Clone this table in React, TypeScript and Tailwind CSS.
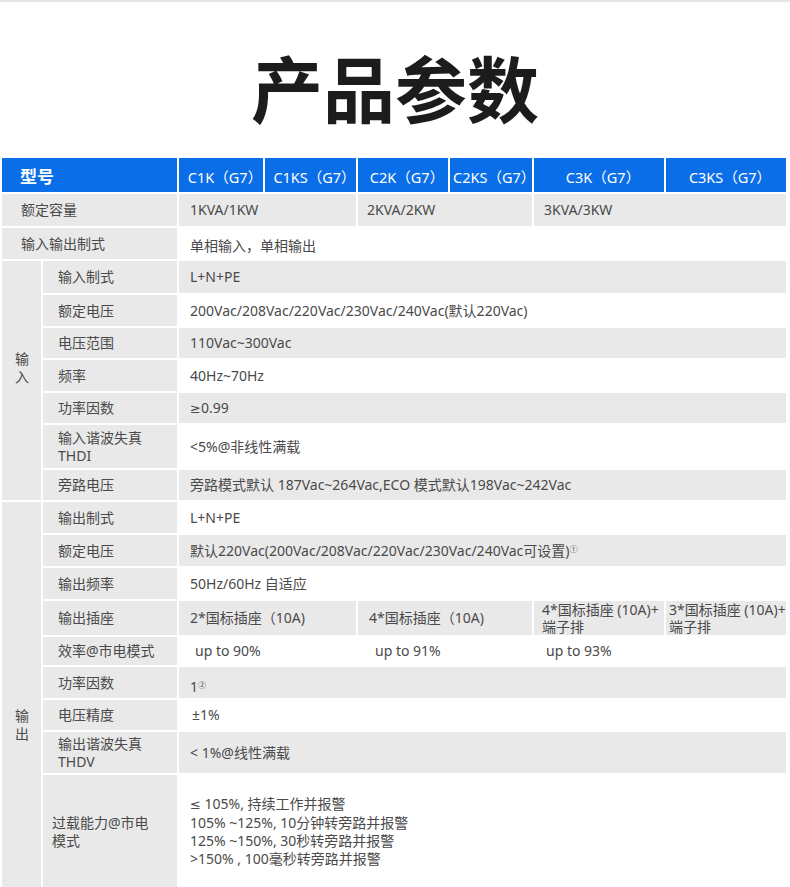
import { ReactNode } from "react"

const gray = "bg-[#e9e9e9]"
const blue = "bg-[#0a6ee8]"

type CellProps = {
  children?: ReactNode
  className?: string
  pad?: string
  colSpan?: number
}

function Label({ children, pad = "pl-[15px]" }: CellProps) {
  return <td className={`${gray} ${pad}`}>{children}</td>
}

function Value({ children, className = "", pad = "pl-[11px]", colSpan = 6 }: CellProps) {
  return (
    <td colSpan={colSpan} className={`${pad} ${className}`}>
      {children}
    </td>
  )
}

function Head({ children, pad = "pl-[8px]" }: CellProps) {
  return <td className={`${blue} pt-1 ${pad} text-center text-[14.5px] whitespace-nowrap`}>{children}</td>
}

// narrow math glyphs, CJK font would draw them full width
function Sym({ children }: CellProps) {
  return <span className="font-['DejaVu_Sans',sans-serif] text-[13px]">{children}</span>
}

export default function App() {
  return (
    <div className="w-[790px] bg-white font-['Noto_Sans','Noto_Sans_CJK_SC',sans-serif] text-[14px] text-[#4a4a4a]">
      <div className="h-[2px] bg-[#e6e6e6]" />
      <h1 className="mt-[48px] mb-[34px] text-center font-['Noto_Sans_CJK_SC',sans-serif] text-[72px] leading-none font-bold text-[#1c1c1c]">
        产品参数
      </h1>

      <table className="w-[788px] table-fixed border-separate border-spacing-[2px] leading-[18px]">
        <colgroup>
          <col className="w-[39px]" />
          <col className="w-[134px]" />
          <col className="w-[84px]" />
          <col className="w-[91px]" />
          <col className="w-[90px]" />
          <col className="w-[82px]" />
          <col className="w-[130px]" />
          <col className="w-[120px]" />
        </colgroup>
        <tbody>
          <tr className="h-[34px] text-white">
            <td colSpan={2} className={`${blue} pt-1 pl-[18px] text-[17px] font-bold`}>型号</td>
            <Head>C1K（G7）</Head>
            <Head>C1KS（G7）</Head>
            <Head>C2K（G7）</Head>
            <Head pad="pl-[3px]">C2KS（G7）</Head>
            <Head>C3K（G7）</Head>
            <Head>C3KS（G7）</Head>
          </tr>

          <tr className="h-[32px]">
            <td colSpan={2} className={`${gray} pl-[19px]`}>额定容量</td>
            <Value colSpan={2} className={gray}>1KVA/1KW</Value>
            <Value colSpan={2} className={gray} pad="pl-[9px]">2KVA/2KW</Value>
            <Value colSpan={2} className={gray} pad="pl-[10px]">3KVA/3KW</Value>
          </tr>

          <tr className="h-[31px]">
            <td colSpan={2} className={`${gray} pl-[19px]`}>输入输出制式</td>
            <Value className="pt-1">单相输入，单相输出</Value>
          </tr>

          {/* 输入 */}
          <tr className="h-[32px]">
            <td rowSpan={7} className={`${gray} pt-[89px] pl-[13px] align-top`}>
              输<br />入
            </td>
            <Label>输入制式</Label>
            <Value className={gray}>L+N+PE</Value>
          </tr>
          <tr className="h-[31px]">
            <Label>额定电压</Label>
            <Value>200Vac/208Vac/220Vac/230Vac/240Vac(默认220Vac)</Value>
          </tr>
          <tr className="h-[30px]">
            <Label>电压范围</Label>
            <Value className={gray}>110Vac~300Vac</Value>
          </tr>
          <tr className="h-[31px]">
            <Label>频率</Label>
            <Value>40Hz~70Hz</Value>
          </tr>
          <tr className="h-[30px]">
            <Label>功率因数</Label>
            <Value className={gray}>
              <Sym>≥</Sym>0.99
            </Value>
          </tr>
          <tr className="h-[43px]">
            <Label>
              输入谐波失真
              <br />
              THDI
            </Label>
            <Value>&lt;5%@非线性满载</Value>
          </tr>
          <tr className="h-[30px]">
            <Label>旁路电压</Label>
            <Value className={gray}>旁路模式默认 187Vac~264Vac,ECO 模式默认198Vac~242Vac</Value>
          </tr>

          {/* 输出 */}
          <tr className="h-[31px]">
            <td rowSpan={11} className={`${gray} pt-[205px] pl-[13px] align-top`}>
              输<br />出
            </td>
            <Label>输出制式</Label>
            <Value>L+N+PE</Value>
          </tr>
          <tr className="h-[31px]">
            <Label>额定电压</Label>
            <Value className={gray}>
              默认220Vac(200Vac/208Vac/220Vac/230Vac/240Vac可设置)
              <sup className="text-[8px]">①</sup>
            </Value>
          </tr>
          <tr className="h-[31px]">
            <Label>输出频率</Label>
            <Value>50Hz/60Hz 自适应</Value>
          </tr>
          <tr className="h-[34px]">
            <Label>输出插座</Label>
            <Value colSpan={2} className={gray}>2*国标插座（10A)</Value>
            <Value colSpan={2} className={gray}>4*国标插座（10A)</Value>
            <Value colSpan={1} className={`${gray} whitespace-nowrap leading-[17px]`} pad="pl-[8px]">
              4*国标插座 (10A)+
              <br />
              端子排
            </Value>
            <Value colSpan={1} className={`${gray} whitespace-nowrap leading-[17px]`} pad="pl-[3px]">
              3*国标插座 (10A)+
              <br />
              端子排
            </Value>
          </tr>
          <tr className="h-[28px]">
            <Label>效率@市电模式</Label>
            <Value colSpan={2} pad="pl-[16px]">up to 90%</Value>
            <Value colSpan={2} pad="pl-[17px]">up to 91%</Value>
            <Value colSpan={2} pad="pl-[12px]">up to 93%</Value>
          </tr>
          <tr className="h-[31px]">
            <Label>功率因数</Label>
            <Value className={`${gray} pt-2`}>
              1<sup className="text-[8px]">②</sup>
            </Value>
          </tr>
          <tr className="h-[30px]">
            <Label>电压精度</Label>
            <Value pad="pl-[13px]">±1%</Value>
          </tr>
          <tr className="h-[41px]">
            <Label>
              输出谐波失真
              <br />
              THDV
            </Label>
            <Value className={gray}>&lt; 1%@线性满载</Value>
          </tr>
          <tr className="h-[113px]">
            <Label pad="pl-[9px]">
              过载能力@市电
              <br />
              模式
            </Label>
            <Value>
              <Sym>≤</Sym> 105%, 持续工作并报警
              <br />
              105% ~125%, 10分钟转旁路并报警
              <br />
              125% ~150%, 30秒转旁路并报警
              <br />
              &gt;150% , 100毫秒转旁路并报警
            </Value>
          </tr>
        </tbody>
      </table>
    </div>
  )
}
